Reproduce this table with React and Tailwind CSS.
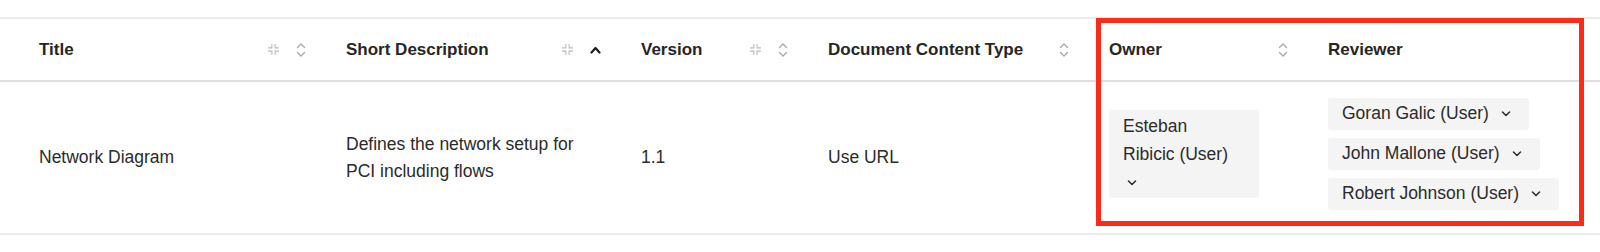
import React from "react";

function Collapse(){
  return(
    <svg width="13" height="13" viewBox="0 0 24 24" fill="none" stroke="#b9b9b9" strokeWidth="2" strokeLinecap="square">
      <path d="M9 3v6H3" />
      <path d="M15 3v6h6" />
      <path d="M3 15h6v6" />
      <path d="M21 15h-6v6" />
    </svg>
  );
}

function SortBoth(){
  return(
    <svg width="10" height="16" viewBox="0 0 10 16" fill="none" stroke="#a9a9a9" strokeWidth="1.4" strokeLinecap="round" strokeLinejoin="round">
      <path d="M1.5 5.5 L5 2 L8.5 5.5" />
      <path d="M1.5 10.5 L5 14 L8.5 10.5" />
    </svg>
  );
}

function SortUp(){
  return(
    <svg width="11" height="8" viewBox="0 0 11 8" fill="none" stroke="#1e1e1e" strokeWidth="2.2" strokeLinecap="round" strokeLinejoin="round">
      <path d="M1.5 6.5 L5.5 2 L9.5 6.5" />
    </svg>
  );
}

function Caret(){
  return(
    <svg width="10" height="6" viewBox="0 0 10 6" fill="none" stroke="#2b2b2b" strokeWidth="1.5" strokeLinecap="round" strokeLinejoin="round">
      <path d="M1.5 1 L5 4.5 L8.5 1" />
    </svg>
  );
}

function Head({label, collapse, sort}){
  return(
    <div className="flex items-center justify-between px-5">
      <span>{label}</span>
      <div className="flex items-center gap-[16px]">
        {collapse && <Collapse />}
        {sort==="both" && <SortBoth />}
        {sort==="up" && <SortUp />}
      </div>
    </div>
  );
}

function Chip({name}){
  return(
    <div className="inline-flex items-center bg-[#f4f4f4] rounded-[3px] h-[32px] pl-[14px] pr-[18px]">
      <span>{name}</span>
      <span className="ml-[12px] flex"><Caret /></span>
    </div>
  );
}

export default function App(){
  const reviewers=["Goran Galic (User)","John Mallone (User)","Robert Johnson (User)"];

  return(
    <div className="relative h-[252px] bg-white pt-[17px] font-['Liberation_Sans',Arial,sans-serif] text-[#2b2b2b]">

      <div className="border-t-2 border-[#ececec]">

        {/* header */}
        <div className="grid grid-cols-[307px_295px_187px_281px_219px_1fr] pl-[19px] h-[63px] items-center border-b-2 border-[#dedede] text-[17px] font-bold text-[#262626]">
          <Head label="Title" collapse sort="both" />
          <Head label="Short Description" collapse sort="up" />
          <Head label="Version" collapse sort="both" />
          <Head label="Document Content Type" sort="both" />
          <Head label="Owner" sort="both" />
          <Head label="Reviewer" />
        </div>

        {/* row */}
        <div className="grid grid-cols-[307px_295px_187px_281px_219px_1fr] pl-[19px] h-[153px] items-center border-b-2 border-[#ececec] text-[17.5px] leading-[27px]">
          <div className="px-5">Network Diagram</div>
          <div className="px-5">Defines the network setup for<br/>PCI including flows</div>
          <div className="px-5">1.1</div>
          <div className="px-5">Use URL</div>
          <div className="px-5 pb-2">
            <div className="w-[150px] bg-[#f4f4f4] rounded-[3px] pl-[14px] pr-[20px] py-[2px] leading-[28px]">
              Esteban Ribicic (User)
              <span className="inline-block ml-1 align-middle"><Caret /></span>
            </div>
          </div>
          <div className="px-5 pb-2 flex flex-col items-start gap-2">
            {reviewers.map(r=>(
              <Chip key={r} name={r} />
            ))}
          </div>
        </div>

      </div>

      {/* highlight box */}
      <div className="absolute left-[1096px] top-[18px] w-[488px] h-[208px] border-[5px] border-[#ff2a17] pointer-events-none" />

    </div>
  );
}
